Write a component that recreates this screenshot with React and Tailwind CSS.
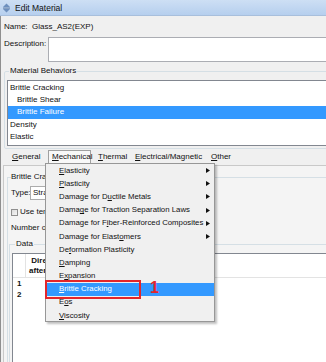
import React from 'react'

// mechanical submenu entries, u = underlined mnemonic letter
const menuItems = [
  { pre: '', u: 'E', post: 'lasticity', sub: true },
  { pre: '', u: 'P', post: 'lasticity', sub: true },
  { pre: 'Damage for D', u: 'u', post: 'ctile Metals', sub: true },
  { pre: 'Dama', u: 'g', post: 'e for Traction Separation Laws', sub: true },
  { pre: 'Damage for F', u: 'i', post: 'ber-Reinforced Composites', sub: true },
  { pre: 'Damage for Elast', u: 'o', post: 'mers', sub: true },
  { pre: 'De', u: 'f', post: 'ormation Plasticity' },
  { pre: '', u: 'D', post: 'amping' },
  { pre: 'E', u: 'x', post: 'pansion' },
  { pre: '', u: 'B', post: 'rittle Cracking', active: true },
  { pre: 'E', u: 'o', post: 's' },
  { pre: '', u: 'V', post: 'iscosity' },
]

const behaviors = [
  { name: 'Brittle Cracking', indent: false },
  { name: 'Brittle Shear', indent: true },
  { name: 'Brittle Failure', indent: true, selected: true },
  { name: 'Density', indent: false },
  { name: 'Elastic', indent: false },
]

const U = ({ children }) => <span className="underline underline-offset-[1px]">{children}</span>

const App = () => {
  return (
    <div className="relative w-[326px] h-[362px] overflow-hidden bg-[#f0f0f0] font-['Liberation_Sans',Arial,sans-serif] text-[8px] leading-[10px] text-[#111] whitespace-nowrap">
      {/* title bar */}
      <div className="h-[16px] flex items-center gap-[4px] pl-[2px] bg-linear-to-b from-[#cddff4] to-[#b6cfee] border-b border-[#a8bfdc]">
        <svg width="9" height="10" viewBox="0 0 9 10">
          <path d="M4.5 0.5 L8 4 L1 4 Z" fill="#6d8fbd" />
          <rect x="1" y="4.6" width="7" height="0.9" fill="#4a6a96" />
          <path d="M1 6 L8 6 L4.5 9.5 Z" fill="#6d8fbd" />
        </svg>
        <span className="text-[8.5px]">Edit Material</span>
      </div>

      <div className="h-[346px] border-l border-[#8f8f8f] overflow-hidden">
        <div className="h-[21px] flex items-center pl-[3px]">
          <span className="w-[28px]">Name:</span>
          <span>Glass_AS2(EXP)</span>
        </div>

        <div className="flex h-[25px]">
          <div className="w-[47px] shrink-0 pl-[3px] pt-[1.5px]">Description:</div>
          <div className="w-[300px] shrink-0 bg-white border border-[#abadb3]"></div>
        </div>

        <fieldset className="mt-[4px] ml-[3px] w-[340px] border border-[#d5dfe5] rounded-[2px] px-[2px] pb-[2px]">
          <legend className="ml-[2px] px-[1px]">Material Behaviors</legend>
          <div className="mt-[4px] h-[66px] bg-white border border-[#828790] pt-[0.5px]">
            {behaviors.map((b) => (
              <div
                key={b.name}
                className={`h-[12.4px] leading-[12.4px] ${b.indent ? 'pl-[9px]' : 'pl-[2px]'} ${b.selected ? 'bg-[#3399ff] text-white' : ''}`}
              >
                {b.name}
              </div>
            ))}
          </div>
        </fieldset>

        {/* menu bar */}
        <div className="mt-[1px] h-[13px] flex items-stretch">
          <div className="w-[11px]"></div>
          <div className="w-[36px] flex items-center"><U>G</U>eneral</div>
          <div className="w-[43px] flex items-center pl-[3px] border border-b-0 border-[#a0a0a0] bg-[#f8f8f8]"><U>M</U>echanical</div>
          <div className="w-[7px]"></div>
          <div className="w-[37px] flex items-center"><U>T</U>hermal</div>
          <div className="w-[76px] flex items-center"><U>E</U>lectrical/Magnetic</div>
          <div className="flex items-center"><U>O</U>ther</div>
        </div>

        {/* tab page */}
        <div className="mt-[2px] ml-[2px] h-[200px] border-t border-l border-[#c9c9c9] bg-[#f4f4f4] pt-[6px] pl-[3px]">
          <fieldset className="w-[340px] border border-[#d5dfe5] px-[3px] pb-[4px]">
            <legend>Brittle Cracking</legend>
            <div className="mt-[4px] h-[14px] flex items-center">
              <span className="w-[19px] shrink-0">Type:</span>
              <div className="w-[100px] h-[14px] bg-white border border-[#acacac] pl-[2px] flex items-center">Strain</div>
            </div>
            <div className="mt-[7px] h-[10px] flex items-center">
              <div className="w-[7px] h-[7px] border border-[#8f8f8f] bg-linear-to-br from-[#dcdcdc] to-[#f6f6f6]"></div>
              <span className="ml-[2px]">Use temperature-dependent data</span>
            </div>
            <div className="mt-[6px] h-[10px] flex items-center">Number of field variables:</div>

            <fieldset className="mt-[6px] -ml-[2px] w-[330px] border border-[#d5dfe5]">
              <legend className="ml-[5px] px-[1px]">Data</legend>
              <div className="mt-[4px] ml-[2px] w-[320px] h-[120px] bg-white border border-[#828790]">
                <div className="flex h-[24px] border-b border-[#e3e3e3]">
                  <div className="w-[13px] border-r border-[#e3e3e3]"></div>
                  <div className="w-[60px] flex items-center justify-center text-center font-bold leading-[10px]">
                    Direct Stress<br />after Cracking
                  </div>
                </div>
                <div className="h-[11px] flex items-center pl-[4px] font-bold">1</div>
                <div className="h-[11px] flex items-center pl-[4px] font-bold">2</div>
              </div>
            </fieldset>
          </fieldset>
        </div>
      </div>

      {/* open Mechanical dropdown */}
      <div className="absolute left-[45px] top-[163px] w-[170px] h-[159px] bg-[#f0f0f0] border border-[#979797] shadow-[2px_2px_2px_rgba(0,0,0,0.25)]">
        {menuItems.map((m, i) => (
          <div
            key={i}
            className={`h-[13.2px] flex items-center justify-between pl-[13px] pr-[4px] text-[7.8px] ${m.active ? 'bg-[#3399ff] text-white' : ''}`}
          >
            <span className="whitespace-nowrap">
              {m.pre}
              <U>{m.u}</U>
              {m.post}
            </span>
            {m.sub && (
              <svg width="4" height="5" viewBox="0 0 4 5" className="shrink-0">
                <path d="M0 0 L4 2.5 L0 5 Z" fill="#111" />
              </svg>
            )}
          </div>
        ))}
      </div>

      {/* annotation */}
      <div className="absolute left-[45px] top-[280px] w-[96px] h-[19px] border-2 border-[#e3262b]"></div>
      <div className="absolute left-[150px] top-[280px] text-[16px] font-bold leading-none text-[#e3262b]">1</div>
    </div>
  )
}

export default App
